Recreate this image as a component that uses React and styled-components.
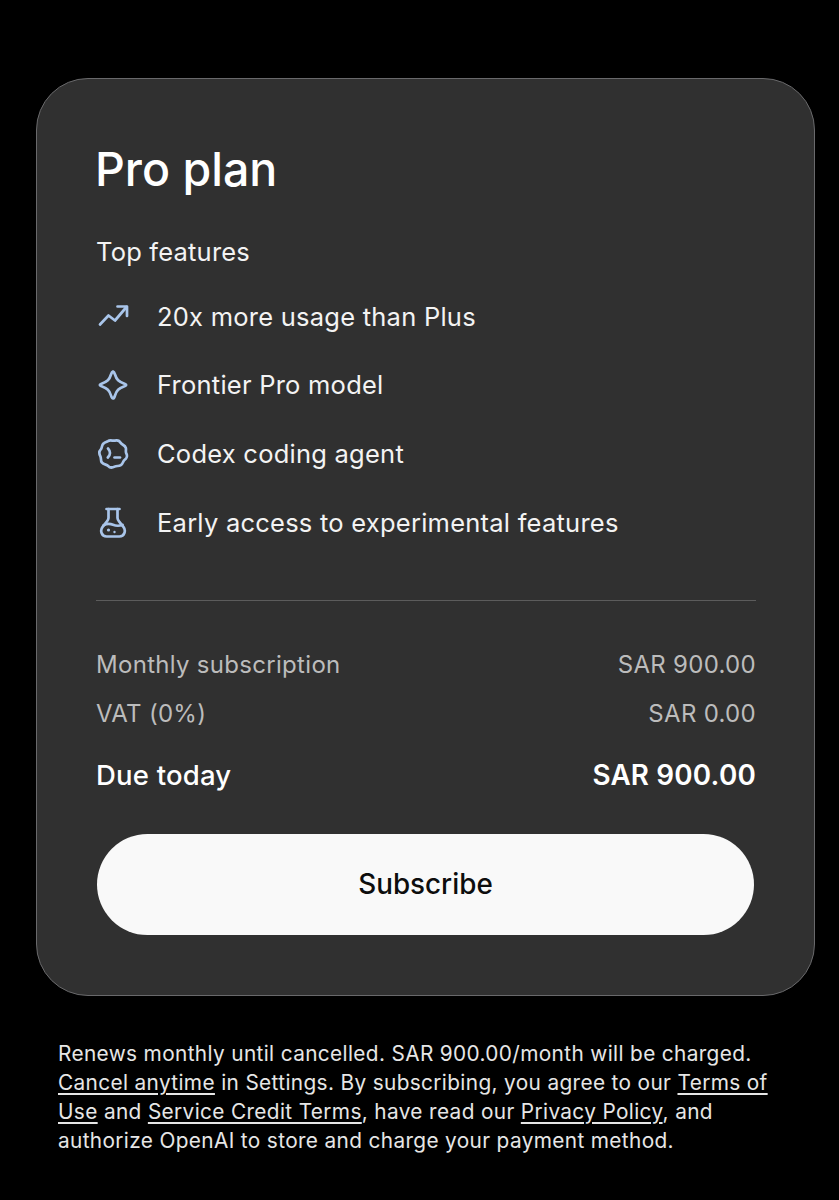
import React from 'react';
import styled, { createGlobalStyle } from 'styled-components';

const GlobalStyle = createGlobalStyle`
  html, body {
    margin: 0;
    padding: 0;
    background: #000;
  }
  body {
    font-family: Inter, "Noto Sans", sans-serif;
    -webkit-font-smoothing: antialiased;
  }
`;

function TrendIcon() {
  return (
    <Icon viewBox="0 0 32 32">
      <path d="M3 24.5 L11.5 15.5 L18 20.5 L29.5 7" />
      <path d="M20.5 6.5 H30 V16" />
    </Icon>
  );
}

function SparkIcon() {
  return (
    <Icon viewBox="0 0 32 32">
      <path d="M16 2.5 C17 3 17.5 4 18 5.5 C19.5 10.5 21.5 12.5 28 15 C29.6 15.6 29.6 16.4 28 17 C21.5 19.5 19.5 21.5 18 26.5 C17.4 28.6 16.6 29.5 16 29.5 C15.4 29.5 14.6 28.6 14 26.5 C12.5 21.5 10.5 19.5 4 17 C2.4 16.4 2.4 15.6 4 15 C10.5 12.5 12.5 10.5 14 5.5 C14.5 4 15 3 16 2.5 Z" />
    </Icon>
  );
}

function CodexIcon() {
  return (
    <Icon viewBox="0 0 32 32">
      <path d="M11 3.2 C13.4 1.4 15.6 3.2 17.8 2.6 C20.6 1.8 22.6 2.8 23.8 5 C24.8 6.8 28 7 28.8 9.8 C29.4 12 28.2 13.4 29.4 15.6 C30.6 18 29.6 20.6 27.6 21.8 C26 22.8 26.2 25.6 23.8 27.2 C21.6 28.6 19.8 27.4 17.6 28.6 C15 30 12.6 29.6 11 27.8 C9.8 26.4 6.6 26.8 4.8 24.4 C3.4 22.4 4.4 20.4 3.4 18.4 C2 15.8 2 13.2 3.8 11.4 C5.2 10 4.4 7.2 6.6 5.4 C8.2 4 9.6 4.2 11 3.2 Z" />
      <path d="M11 10.5 C12.6 12.2 13 13.6 13 15 C13 16.4 12.2 18 10.8 19.5" />
      <path d="M17.5 19.5 H23" />
    </Icon>
  );
}

function FlaskIcon() {
  return (
    <Icon viewBox="0 0 32 32">
      <path d="M9.5 2 H22.5" />
      <path d="M11.5 2 V11 C11.5 12.5 10.8 13.4 9.8 14.6 L5.6 19.8 C2.8 23.4 4.4 29.5 9.6 29.5 H22.4 C27.6 29.5 29.2 23.4 26.4 19.8 L22.2 14.6 C21.2 13.4 20.5 12.5 20.5 11 V2" />
      <path d="M6.4 18.4 C10 16.4 13 16.6 16 17.8 C19 19 22.4 19 25.6 18" />
      <Dot cx="11.5" cy="23" r="1.6" />
      <Dot cx="17.5" cy="25" r="1.2" />
    </Icon>
  );
}

const features = [
  { icon: <TrendIcon />, label: '20x more usage than Plus' },
  { icon: <SparkIcon />, label: 'Frontier Pro model' },
  { icon: <CodexIcon />, label: 'Codex coding agent' },
  { icon: <FlaskIcon />, label: 'Early access to experimental features' },
];

function App() {
  return (
    <Page>
      <GlobalStyle />
      <Card>
        <Title>Pro plan</Title>
        <Subtitle>Top features</Subtitle>
        <FeatureList>
          {features.map((feature) => (
            <Feature key={feature.label}>
              {feature.icon}
              <span>{feature.label}</span>
            </Feature>
          ))}
        </FeatureList>
        <Divider />
        <PriceRow>
          <span>Monthly subscription</span>
          <span>SAR 900.00</span>
        </PriceRow>
        <PriceRow>
          <span>VAT (0%)</span>
          <span>SAR 0.00</span>
        </PriceRow>
        <TotalRow>
          <span>Due today</span>
          <strong>SAR 900.00</strong>
        </TotalRow>
        <SubscribeButton>Subscribe</SubscribeButton>
      </Card>
      <Legal>
        Renews monthly until cancelled. SAR 900.00/month will be charged.
        <br />
        <a>Cancel anytime</a> in Settings. By subscribing, you agree to our <a>Terms of</a>
        <br />
        <a>Use</a> and <a>Service Credit Terms</a>, have read our <a>Privacy Policy</a>, and
        <br />
        authorize OpenAI to store and charge your payment method.
      </Legal>
    </Page>
  );
}

const Page = styled.div`
  height: 1200px;
  box-sizing: border-box;
  padding: 78px 24px 0 36px;
  overflow: hidden;
  background: #000;
`;

const Card = styled.div`
  box-sizing: border-box;
  height: 918px;
  padding: 60px 58px 0 59px;
  background: #303030;
  border: 1px solid #69696b;
  border-radius: 52px;
`;

const Title = styled.h1`
  margin: 0 0 0 -1px;
  color: #fff;
  font-size: 46.5px;
  font-weight: 500;
  line-height: 60px;
`;

const Subtitle = styled.div`
  margin-top: 35px;
  color: #f3f3f3;
  font-size: 25.5px;
  line-height: 36px;
  letter-spacing: 0.2px;
`;

const FeatureList = styled.ul`
  list-style: none;
  margin: 28px 0 0;
  padding: 0;
  display: flex;
  flex-direction: column;
  gap: 32.9px;
`;

const Feature = styled.li`
  display: flex;
  align-items: center;
  gap: 28px;
  height: 36px;
  color: #f3f3f3;
  font-size: 25.5px;
  letter-spacing: 0.24px;
`;

const Icon = styled.svg`
  flex: none;
  width: 32px;
  height: 32px;
  margin-left: 1px;
  fill: none;
  stroke: #a9c5ea;
  stroke-width: 2.7;
  stroke-linecap: round;
  stroke-linejoin: round;
`;

const Dot = styled.circle`
  fill: #a9c5ea;
  stroke: none;
`;

const Divider = styled.hr`
  margin: 59px 0 46px;
  border: 0;
  height: 1px;
  background: #5c5c5c;
`;

const PriceRow = styled.div`
  display: flex;
  justify-content: space-between;
  height: 36px;
  margin-bottom: 13px;
  color: #bcbcbc;
  font-size: 24px;
  line-height: 36px;
  letter-spacing: 0.3px;
`;

const TotalRow = styled.div`
  display: flex;
  justify-content: space-between;
  margin-top: 25px;
  color: #fff;
  font-size: 27.5px;
  font-weight: 500;
  line-height: 36px;
  letter-spacing: 0.2px;

  strong {
    font-size: 27.8px;
    font-weight: 600;
  }
`;

const SubscribeButton = styled.button`
  display: block;
  box-sizing: border-box;
  width: 657px;
  height: 101px;
  margin: 41px 0 0 1px;
  border: 0;
  border-radius: 51px;
  background: #f9f9f9;
  color: #0d0d0d;
  font-family: inherit;
  font-size: 27.8px;
  font-weight: 500;
`;

const Legal = styled.p`
  margin: 43px 0 0 22px;
  color: #e6e6e6;
  font-size: 20.8px;
  line-height: 29px;
  letter-spacing: 0.36px;
  white-space: nowrap;

  a {
    color: inherit;
    text-decoration: underline;
    text-underline-offset: 3px;
    text-decoration-thickness: 1.5px;
  }
`;

export default App;
